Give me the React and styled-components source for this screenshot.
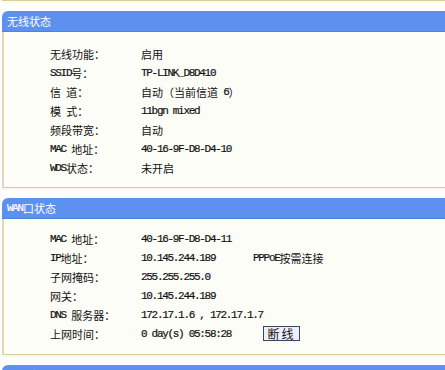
import React from 'react';
import styled, { createGlobalStyle } from 'styled-components';

const GlobalStyle = createGlobalStyle`
  html, body {
    margin: 0;
    padding: 0;
    background: #ffffff;
  }
  body {
    width: 445px;
    height: 370px;
    overflow: hidden;
    font-family: "Noto Sans CJK SC", "DejaVu Sans", sans-serif;
    color: #1a1a1a;
  }
`;

const Page = styled.div`
  width: 470px;
  display: flex;
  flex-direction: column;
  gap: 10px;
`;

// bottom edge of the panel above, cut off by the window
const Tail = styled.div`
  margin-left: 2px;
  height: 0;
  border-bottom: 1px solid #d8caa4;
  box-shadow: 0 2px 0 #fbf7e6;
`;

const Panel = styled.section`
  margin-left: 2px;
  display: flex;
  flex-direction: column;
`;

const Header = styled.h2`
  margin: 0;
  height: 21px;
  box-sizing: border-box;
  padding-left: 5px;
  display: flex;
  align-items: center;
  background: #5e90ef;
  border-bottom: 1px solid #4f82e2;
  border-top-left-radius: 6px;
  color: #ffffff;
  font-size: 11px;
  font-weight: normal;
`;

const Body = styled.div`
  background: #fdfdf8;
  border-left: 2px solid #e4d8ba;
  border-bottom: 1px solid #d8caa4;
  box-shadow: 0 2px 0 #fbf7e6;
  padding: ${({ $pt }) => $pt}px 0 ${({ $pb }) => $pb}px 46px;
  display: grid;
  grid-template-columns: ${({ $cols }) => $cols};
  grid-auto-rows: 19px;
  align-items: center;
  font-size: 11px;
  color: #111;
`;

const Cell = styled.div`
  white-space: nowrap;
  display: flex;
  align-items: center;
`;

const Mono = styled.span`
  font-family: "Liberation Mono", "DejaVu Sans Mono", monospace;
  font-size: 11px;
  letter-spacing: -1.3px;
  -webkit-text-stroke: 0.2px currentColor;
  white-space: pre;
`;

const Button = styled.button`
  margin-left: 10px;
  width: 37px;
  height: 15px;
  padding: 0;
  box-sizing: border-box;
  border: 1px solid #3a4560;
  background: #eef0f8;
  font-family: "Noto Sans CJK SC", sans-serif;
  font-size: 12px;
  letter-spacing: 2px;
  line-height: 13px;
  color: #111;
`;

function Txt({ children }) {
  const parts = String(children).match(/[\x20-\x7e]+|[^\x20-\x7e]+/g) || [];
  return parts.map((p, i) =>
    /^[\x20-\x7e]+$/.test(p) ? <Mono key={i}>{p}</Mono> : <span key={i}>{p}</span>
  );
}

const wireless = [
  ['无线功能：', '启用'],
  ['SSID号：', 'TP-LINK_D8D410'],
  ['信 道：', '自动（当前信道 6）'],
  ['模 式：', '11bgn mixed'],
  ['频段带宽：', '自动'],
  ['MAC 地址：', '40-16-9F-D8-D4-10'],
  ['WDS状态：', '未开启'],
];

const wan = [
  ['MAC 地址：', '40-16-9F-D8-D4-11', ''],
  ['IP地址：', '10.145.244.189', 'PPPoE按需连接'],
  ['子网掩码：', '255.255.255.0', ''],
  ['网关：', '10.145.244.189', ''],
  ['DNS 服务器：', '172.17.1.6 , 172.17.1.7', ''],
  ['上网时间：', '0 day(s) 05:58:28', 'button'],
];

export default function App() {
  return (
    <>
      <GlobalStyle />
      <Page>
        <Tail />
        <Panel>
          <Header>无线状态</Header>
          <Body $pt={12} $pb={10} $cols="91px auto">
            {wireless.map(([label, value]) => (
              <React.Fragment key={label}>
                <Cell><Txt>{label}</Txt></Cell>
                <Cell><Txt>{value}</Txt></Cell>
              </React.Fragment>
            ))}
          </Body>
        </Panel>
        <Panel>
          <Header><Txt>WAN</Txt>口状态</Header>
          <Body $pt={10} $pb={11} $cols="91px 112px auto">
            {wan.map(([label, value, extra]) => (
              <React.Fragment key={label}>
                <Cell><Txt>{label}</Txt></Cell>
                <Cell><Txt>{value}</Txt></Cell>
                <Cell>
                  {extra === 'button' ? <Button>断线</Button> : <Txt>{extra}</Txt>}
                </Cell>
              </React.Fragment>
            ))}
          </Body>
        </Panel>
        <Panel>
          <Header>无线客户端</Header>
        </Panel>
      </Page>
    </>
  );
}
